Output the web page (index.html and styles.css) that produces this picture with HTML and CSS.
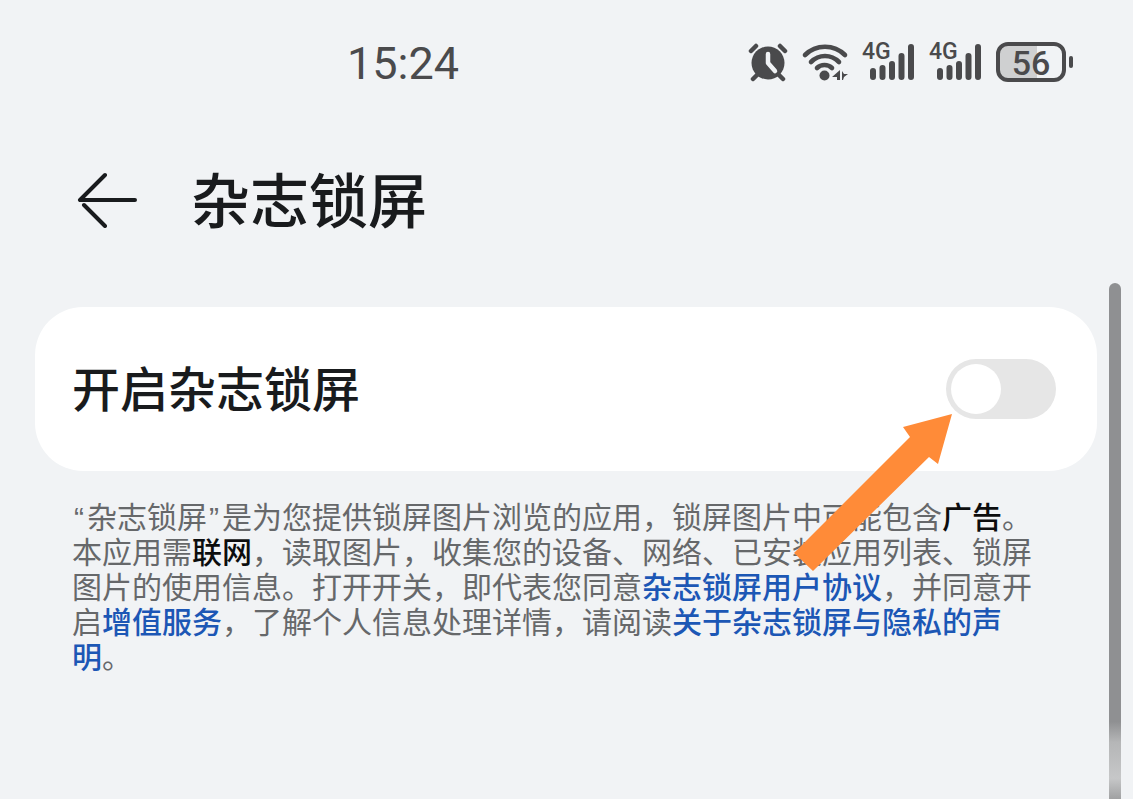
FILE: index.html
```
<!DOCTYPE html>
<html lang="zh-CN">
<head>
    <meta charset="UTF-8">
    <meta name="viewport" content="width=device-width, initial-scale=1">
    <title>杂志锁屏</title>
    <link rel="stylesheet" href="styles.css">
</head>
<body>
    <div class="status-bar">
        <time class="clock">15:24</time>
        <div class="status-icons">
            <svg class="alarm" width="40" height="40" viewBox="0 0 40 40">
                <circle cx="20" cy="21" r="16.5" fill="#4a4a4c"/>
                <path d="M3 9l5-5M37 9l-5-5M9 33l-4 4M31 33l4 4" stroke="#4a4a4c" stroke-width="4.5" stroke-linecap="round"/>
                <path d="M20 12v9l7 8" fill="none" stroke="#f1f3f5" stroke-width="4.5" stroke-linecap="round" stroke-linejoin="round"/>
            </svg>
            <svg class="wifi" width="48" height="40" viewBox="0 0 48 40">
                <g fill="none" stroke="#4a4a4c" stroke-width="4.6" stroke-linecap="round">
                    <path d="M4 13C15 2 33 2 44 13"/>
                    <path d="M10 20C18 12 30 12 38 20"/>
                    <path d="M16 26c4-4 11-4 15 0"/>
                </g>
                <circle cx="23.5" cy="33.5" r="5" fill="#4a4a4c"/>
                <path d="M39 28v10h-3v-3h-5zM41 29l2 3h4l-4 3-1 3h-1z" fill="#4a4a4c"/>
            </svg>
            <span class="signal">
                <svg width="54" height="40" viewBox="0 0 54 40">
                    <path d="M11 29v6M20.5 26v9M30 22v13M39.5 14v21M49 5v30" stroke="#4a4a4c" stroke-width="6" stroke-linecap="round"/>
                </svg>
                <span class="network">4G</span>
            </span>
            <span class="signal">
                <svg width="54" height="40" viewBox="0 0 54 40">
                    <path d="M11 29v6M20.5 26v9M30 22v13M39.5 14v21M49 5v30" stroke="#4a4a4c" stroke-width="6" stroke-linecap="round"/>
                </svg>
                <span class="network">4G</span>
            </span>
            <span class="battery">56</span>
        </div>
    </div>

    <header class="title-bar">
        <button type="button" class="back" aria-label="返回">
            <svg width="60" height="56" viewBox="0 0 60 56">
                <path d="M28 3 3 28H58M7 33l21 21" fill="none" stroke="#191b1d" stroke-width="4" stroke-linecap="round" stroke-linejoin="round"/>
            </svg>
        </button>
        <h1>杂志锁屏</h1>
    </header>

    <main>
        <div class="card">
            <label for="lockSwitch">开启杂志锁屏</label>
            <input type="checkbox" id="lockSwitch" class="switch">
            <svg class="pointer" width="158" height="158" viewBox="0 0 158 158">
                <path d="M158 0 109 13l7 10L0 139l19 18L135 43l9 7z" fill="#ff8b38"/>
            </svg>
        </div>
        <p class="notice"><span class="quote">“</span>杂志锁屏<span class="quote">”</span>是为您提供锁屏图片浏览的应用，锁屏图片中可能包含<b>广告</b>。本应用需<b>联网</b>，读取图片，收集您的设备、网络、已安装应用列表、锁屏图片的使用信息。打开开关，即代表您同意<a href="#">杂志锁屏用户协议</a>，并同意开启<a href="#">增值服务</a>，了解个人信息处理详情，请阅读<a href="#">关于杂志锁屏与隐私的声明</a>。</p>
    </main>

    <div class="scrollbar"></div>
</body>
</html>
```

FILE: styles.css
```
* {
    box-sizing: border-box;
}
body {
    position: relative;
    min-height: 100vh;
    margin: 0;
    background-color: #f1f3f5;
    color: #191b1d;
    font-family: "Noto Sans", "Noto Sans CJK SC", sans-serif;
}

/* status bar */
.status-bar {
    display: flex;
    align-items: center;
    justify-content: space-between;
    padding: 36px 59px 0 347px;
    color: #4a4a4c;
    font-family: Roboto, sans-serif;
}
.clock {
    font-size: 45px;
    line-height: 56px;
}
.status-icons {
    display: flex;
    align-items: center;
    gap: 13px;
    padding-bottom: 4px;
}
.status-icons svg {
    display: block;
}
.signal {
    position: relative;
}
.network {
    position: absolute;
    top: -1px;
    left: 0;
    font-size: 23px;
    font-weight: 500;
    line-height: 22px;
}
.battery {
    position: relative;
    width: 70px;
    height: 40px;
    margin-right: 8px;
    border: 4px solid #4a4a4c;
    border-radius: 12px;
    background: linear-gradient(to right, #cfd0d1 60%, #f1f3f5 60%);
    font-size: 34px;
    font-weight: 500;
    line-height: 34px;
    text-align: center;
}
.battery::after {
    content: "";
    position: absolute;
    top: 10px;
    right: -11px;
    width: 4px;
    height: 12px;
    border-radius: 2px;
    background-color: #4a4a4c;
}

/* title */
.title-bar {
    display: flex;
    align-items: center;
    gap: 54px;
    padding: 68px 77px 0;
}
.back {
    padding: 0;
    border: none;
    background: none;
    cursor: pointer;
}
.back svg {
    display: block;
}
h1 {
    margin: 0;
    font-size: 59px;
    font-weight: 500;
    line-height: 80px;
}

/* switch card */
main {
    padding: 67px 36px 0 35px;
}
.card {
    position: relative;
    display: flex;
    align-items: center;
    justify-content: space-between;
    padding: 52px 41px 52px 37px;
    border-radius: 48px;
    background-color: #fff;
}
.card label {
    font-size: 48px;
    font-weight: 500;
    line-height: 60px;
}
.switch {
    appearance: none;
    width: 110px;
    height: 60px;
    margin: 0;
    padding: 5px;
    border-radius: 30px;
    background-color: #e6e6e6;
    cursor: pointer;
}
.switch::before {
    content: "";
    display: block;
    width: 50px;
    height: 50px;
    border-radius: 50%;
    background-color: #fff;
}
.switch:checked {
    background-color: #0a59f7;
}
.switch:checked::before {
    margin-left: auto;
}
.pointer {
    position: absolute;
    top: 107px;
    right: 145px;
    pointer-events: none;
}

/* notice text */
.notice {
    margin: 28px 0 0;
    padding: 0 62px 0 37px;
    color: #66686a;
    font-size: 30px;
    line-height: 35px;
}
.quote {
    padding: 0 3px 0 2px;
    font-family: "Liberation Sans", sans-serif;
    line-height: 1;
}
.notice b {
    color: #0c0d0e;
    font-weight: 500;
}
.notice a {
    color: #1c57b5;
    font-weight: 500;
    text-decoration: none;
}

.scrollbar {
    position: absolute;
    top: 283px;
    right: 12px;
    bottom: 0;
    width: 12px;
    border-radius: 6px 6px 0 0;
    background: linear-gradient(to bottom, #8f9092 85%, #b5b6b7 89%, #c6c7c8 96%, #a0a1a2 100%);
}
```
